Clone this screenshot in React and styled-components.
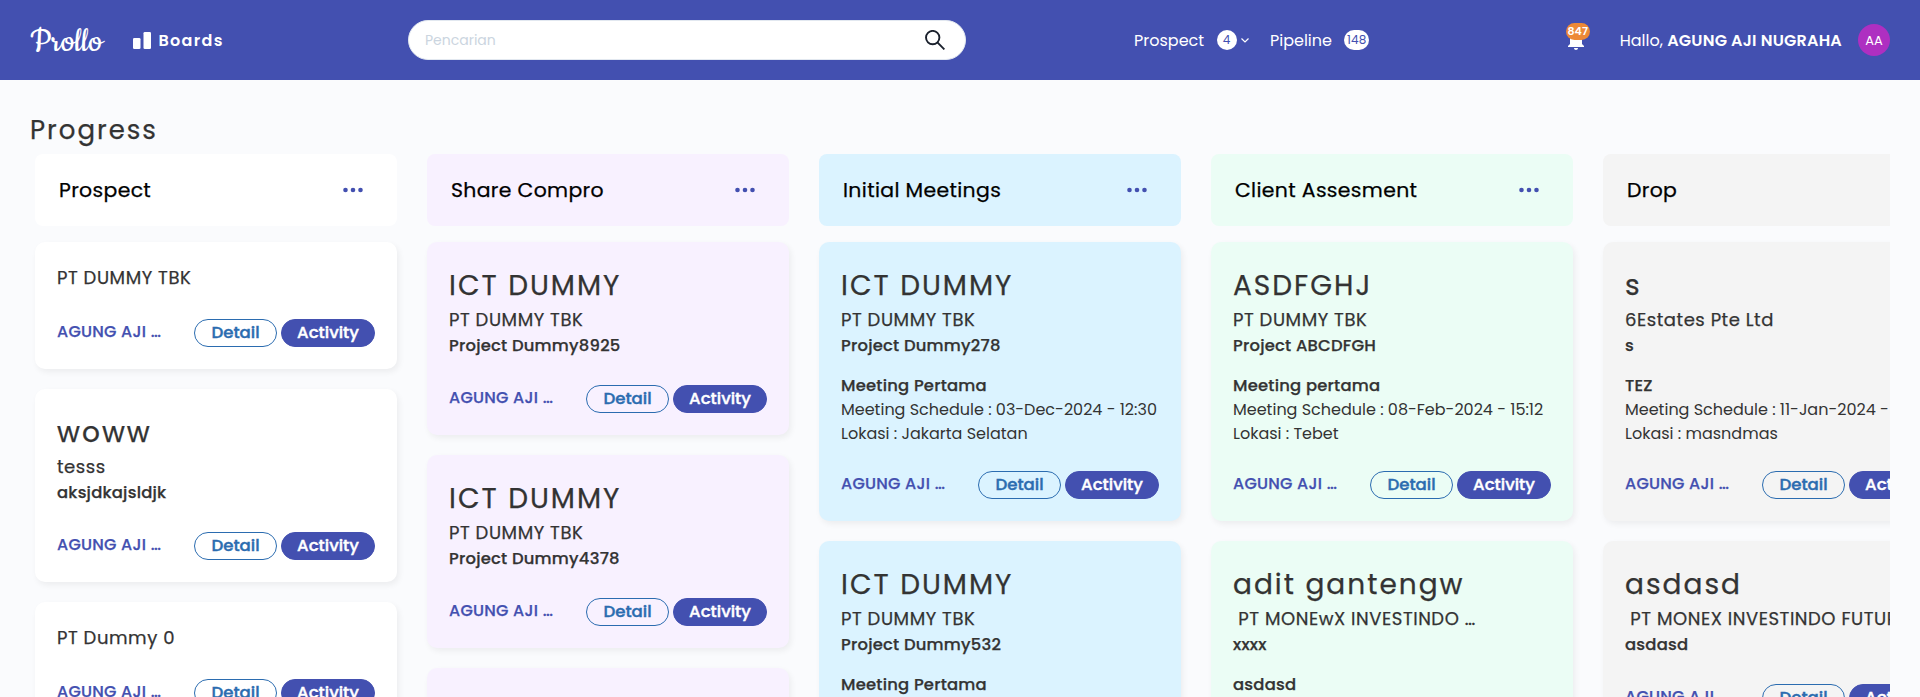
import React from 'react';
import styled, { createGlobalStyle, css } from 'styled-components';

const GlobalStyle = createGlobalStyle`
  * { box-sizing: border-box; }
  body {
    margin: 0;
    background: #fafbfd;
    color: #333;
    font-family: Poppins, Inter, sans-serif;
    font-size: 16px;
  }
`;

const sturdy = css`
  -webkit-text-stroke: 0.25px currentColor;
`;

const Page = styled.div`
  display: flex;
  flex-direction: column;
  height: 697px;
  overflow: hidden;
`;

const TopBar = styled.header`
  display: flex;
  align-items: center;
  flex: none;
  height: 80px;
  padding: 0 30px;
  background: #4350b0;
  color: #fff;
`;

const Logo = styled.div`
  width: 103px;
  padding-top: 4px;
  font-family: Cookie, cursive;
  font-size: 38.6px;
  line-height: 40px;
`;

const BoardsLink = styled.a`
  display: flex;
  align-items: center;
  gap: 7.5px;
  width: 275px;
  font-weight: 600;
  letter-spacing: 1.3px;
`;

const SearchBox = styled.div`
  display: flex;
  align-items: center;
  justify-content: space-between;
  width: 558px;
  height: 40px;
  padding: 0 20px 0 16px;
  border: 1px solid #e2e8f0;
  border-radius: 20px;
  background: #fff;
  color: #cbd5e0;
  font-size: 14px;
`;

const Nav = styled.nav`
  display: flex;
  align-items: center;
  margin-left: 168px;
`;

const NavItem = styled.a`
  display: flex;
  align-items: center;
  width: ${(p) => p.$width}px;
`;

const Count = styled.span`
  display: flex;
  align-items: center;
  justify-content: center;
  min-width: 20px;
  height: 20px;
  margin-left: 12.5px;
  margin-right: 4px;
  padding: 0 2.6px;
  border-radius: 10px;
  background: #fff;
  color: #4350b0;
  font-size: 12px;
  letter-spacing: 0.2px;
`;

const Account = styled.div`
  display: flex;
  align-items: center;
  margin-left: auto;
`;

const Bell = styled.div`
  position: relative;
  width: 24px;
  height: 24px;
  margin-right: 32px;
`;

const BellCount = styled.span`
  position: absolute;
  left: 2px;
  top: -5px;
  width: 24px;
  height: 17px;
  border-radius: 8.5px;
  background: #ed8936;
  font-size: 11px;
  font-weight: 600;
  line-height: 17px;
  text-align: center;
`;

const Name = styled.b`
  font-weight: 600;
  letter-spacing: 0.2px;
`;

const Avatar = styled.div`
  width: 32px;
  height: 32px;
  margin-left: 16px;
  border-radius: 50%;
  background: #ae2fc1;
  font-size: 13px;
  line-height: 33px;
  text-align: center;
`;

const Main = styled.main`
  padding: 29px 30px 0;
`;

const Heading = styled.h1`
  margin: 0 0 3px;
  font-size: 26px;
  font-weight: 400;
  line-height: 42px;
  letter-spacing: 2px;
  ${sturdy}
`;

const Board = styled.div`
  display: flex;
  gap: 30px;
  height: 543px;
  padding-left: 5px;
  overflow: hidden;
`;

const Column = styled.section`
  flex: none;
  width: 362px;
`;

const ColumnHeader = styled.div`
  display: flex;
  align-items: center;
  justify-content: space-between;
  height: 72px;
  margin-bottom: 16px;
  padding: 0 34px 0 24px;
  border-radius: 8px;
  background: ${(p) => p.$tone};
  color: #000;
  font-size: 20.4px;
  letter-spacing: 0.35px;
  ${sturdy}
`;

const Card = styled.article`
  margin-bottom: 20px;
  padding: 22px;
  border-radius: 10px;
  background: ${(p) => p.$tone};
  box-shadow: 2px 3px 6px rgba(0, 0, 0, 0.06);
  white-space: pre;
`;

const Title = styled.h2`
  margin: 0;
  padding-top: 2px;
  font-size: 28px;
  font-weight: 400;
  line-height: 40px;
  letter-spacing: 2px;
  ${sturdy}
`;

const Company = styled.div`
  font-size: 18px;
  line-height: 27px;
  letter-spacing: 0.55px;
  ${sturdy}
`;

const Project = styled.div`
  font-size: 16.4px;
  font-weight: 500;
  line-height: 25px;
  letter-spacing: 0.22px;
  ${sturdy}
`;

const Meeting = styled.div`
  margin: 16px 0 -1px;
  line-height: 24px;
`;

const MeetingTitle = styled.div`
  font-size: 16.4px;
  font-weight: 500;
  letter-spacing: 0.22px;
  ${sturdy}
`;

const MeetingLine = styled.div`
  letter-spacing: 0;
`;

const CardFooter = styled.footer`
  display: flex;
  align-items: center;
  margin-top: ${(p) => p.$space}px;
`;

const Owner = styled.div`
  flex: 1;
  margin-top: -4px;
  color: #4350b0;
  font-weight: 500;
  letter-spacing: 0.25px;
  ${sturdy}
`;

const PillButton = styled.button`
  width: ${(p) => (p.$filled ? 94 : 83)}px;
  height: 28px;
  margin-left: ${(p) => (p.$filled ? 4 : 0)}px;
  padding: 0;
  border: 1px solid ${(p) => (p.$filled ? '#4350b0' : '#2b6cb0')};
  border-radius: 14px;
  background: ${(p) => (p.$filled ? '#4350b0' : 'transparent')};
  color: ${(p) => (p.$filled ? '#fff' : '#2b6cb0')};
  font: 500 16.6px/26px Poppins, Inter, sans-serif;
  -webkit-text-stroke: 0.4px currentColor;
`;

const Icon = styled.svg`
  display: block;
  flex: none;
`;

const columns = [
  {
    name: 'Prospect',
    tone: '#ffffff',
    cards: [
      { company: 'PT DUMMY TBK' },
      { title: 'woww', company: 'tesss', project: 'aksjdkajsldjk' },
      { company: 'PT Dummy 0' },
    ],
  },
  {
    name: 'Share Compro',
    tone: '#f8f1ff',
    cards: [
      { title: 'ICT DUMMY', company: 'PT DUMMY TBK', project: 'Project Dummy8925' },
      { title: 'ICT DUMMY', company: 'PT DUMMY TBK', project: 'Project Dummy4378' },
      { title: ' ', company: ' ', project: ' ' },
    ],
  },
  {
    name: 'Initial Meetings',
    tone: '#dbf3ff',
    cards: [
      {
        title: 'ICT DUMMY', company: 'PT DUMMY TBK', project: 'Project Dummy278',
        meeting: { title: 'Meeting Pertama', lines: ['Meeting Schedule : 03-Dec-2024 - 12:30', 'Lokasi : Jakarta Selatan'] },
      },
      {
        title: 'ICT DUMMY', company: 'PT DUMMY TBK', project: 'Project Dummy532',
        meeting: { title: 'Meeting Pertama', lines: [] },
      },
    ],
  },
  {
    name: 'Client Assesment',
    tone: '#ebfdf5',
    cards: [
      {
        title: 'ASDFGHJ', company: 'PT DUMMY TBK', project: 'Project ABCDFGH',
        meeting: { title: 'Meeting pertama', lines: ['Meeting Schedule : 08-Feb-2024 - 15:12', 'Lokasi : Tebet'] },
      },
      {
        title: 'adit gantengw', company: ' PT MONEwX INVESTINDO …', project: 'xxxx',
        meeting: { title: 'asdasd', lines: [] },
      },
    ],
  },
  {
    name: 'Drop',
    tone: '#f4f4f4',
    cards: [
      {
        title: 's', company: '6Estates Pte Ltd', project: 's',
        meeting: { title: 'TEZ', lines: ['Meeting Schedule : 11-Jan-2024 - 10:00', 'Lokasi : masndmas'] },
      },
      { title: 'asdasd', company: ' PT MONEX INVESTINDO FUTURES', project: 'asdasd' },
    ],
  },
];

function footerSpace(card) {
  // Cards with only a meeting title keep the height of two detail lines.
  if (card.meeting) return card.meeting.lines.length ? 26 : 74;
  return card.project ? 27 : 28;
}

function BoardCard({ card, tone }) {
  return (
    <Card $tone={tone}>
      {card.title && <Title>{card.title}</Title>}
      <Company>{card.company}</Company>
      {card.project && <Project>{card.project}</Project>}
      {card.meeting && (
        <Meeting>
          <MeetingTitle>{card.meeting.title}</MeetingTitle>
          {card.meeting.lines.map((line) => <MeetingLine key={line}>{line}</MeetingLine>)}
        </Meeting>
      )}
      <CardFooter $space={footerSpace(card)}>
        <Owner>AGUNG AJI …</Owner>
        <PillButton>Detail</PillButton>
        <PillButton $filled>Activity</PillButton>
      </CardFooter>
    </Card>
  );
}

export default function App() {
  return (
    <Page>
      <GlobalStyle />
      <TopBar>
        <Logo>Prollo</Logo>
        <BoardsLink>
          <Icon width="18" height="17" viewBox="0 0 18 17" fill="#fff">
            <rect x="0" y="6" width="7.5" height="11" rx="1.3" />
            <rect x="10.5" y="0" width="7.5" height="17" rx="1.3" />
          </Icon>
          Boards
        </BoardsLink>
        <SearchBox>
          Pencarian
          <Icon width="20" height="20" viewBox="0 0 20 20" fill="none" stroke="#1a202c" strokeWidth="1.9">
            <circle cx="7.7" cy="7.6" r="6.7" />
            <path d="M12.4 12.4l7 7" />
          </Icon>
        </SearchBox>
        <Nav>
          <NavItem $width={136}>
            Prospect
            <Count>4</Count>
            <Icon width="8" height="5" viewBox="0 0 8 5" fill="none" stroke="#fff" strokeWidth="1.2">
              <path d="M0.5 0.5L4 4l3.5-3.5" />
            </Icon>
          </NavItem>
          <NavItem $width={104}>
            Pipeline
            <Count>148</Count>
          </NavItem>
        </Nav>
        <Account>
          <Bell>
            <Icon width="24" height="24" viewBox="0 0 24 24" fill="#fff">
              <path d="M12 22c1.1 0 2-.9 2-2h-4c0 1.1.89 2 2 2zm6-6v-5c0-3.07-1.64-5.64-4.5-6.32V4c0-.83-.67-1.5-1.5-1.5s-1.5.67-1.5 1.5v.68C7.63 5.36 6 7.92 6 11v5l-2 2v1h16v-1l-2-2z" />
            </Icon>
            <BellCount>847</BellCount>
          </Bell>
          <span>Hallo, <Name>AGUNG AJI NUGRAHA</Name></span>
          <Avatar>AA</Avatar>
        </Account>
      </TopBar>
      <Main>
        <Heading>Progress</Heading>
        <Board>
          {columns.map((column) => (
            <Column key={column.name}>
              <ColumnHeader $tone={column.tone}>
                {column.name}
                <Icon width="20" height="6" viewBox="0 0 20 6" fill="#4350b0">
                  <circle cx="2.5" cy="3" r="2.3" />
                  <circle cx="10" cy="3" r="2.3" />
                  <circle cx="17.5" cy="3" r="2.3" />
                </Icon>
              </ColumnHeader>
              {column.cards.map((card, i) => <BoardCard key={i} card={card} tone={column.tone} />)}
            </Column>
          ))}
        </Board>
      </Main>
    </Page>
  );
}
